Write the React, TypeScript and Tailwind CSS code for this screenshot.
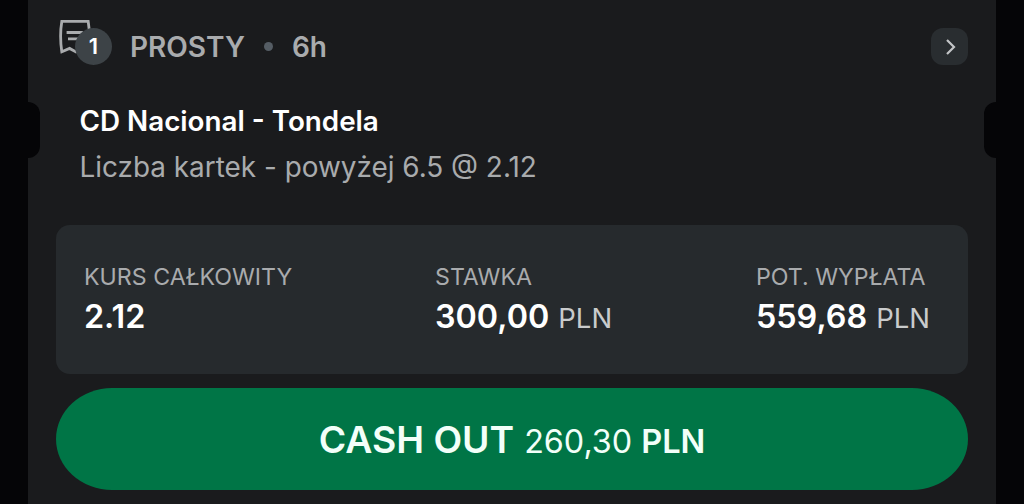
type StatProps = {
  label: string;
  value: string;
  currency?: string;
};

function ReceiptIcon() {
  return (
    <svg width="38" height="38" viewBox="0 0 38 38" fill="none" stroke="#a9abad" strokeWidth="2.8">
      <path d="M5.8 2.4H32.2C33.8 12 33.8 22 32.2 32.7L26.4 29.4L20 32.9L13.6 29.4L5.8 32.7C4.2 22 4.2 12 5.8 2.4Z" />
      <path d="M10.6 13.5H27M12 19.8H26" />
    </svg>
  );
}

function Stat({ label, value, currency }: StatProps) {
  return (
    <div className="whitespace-nowrap">
      <div className="text-[23.2px] leading-8 text-[#a9abad]">{label}</div>
      <div className="text-[32.3px] leading-[48px] font-semibold text-white">
        {value}
        {currency && (
          <span className="ml-[9px] text-[27.5px] leading-none font-normal text-[#c9cbcc]">{currency}</span>
        )}
      </div>
    </div>
  );
}

export default function App() {
  return (
    <div className="h-[504px] w-[1024px] overflow-hidden bg-[#050507] px-7 font-['Inter',sans-serif]">
      <div className="relative flex h-full flex-col bg-[#1a1b1d] px-7">
        <div className="absolute top-[102px] left-0 h-14 w-3 rounded-r-xl bg-[#050507]"></div>
        <div className="absolute top-[102px] right-0 h-14 w-3 rounded-l-xl bg-[#050507]"></div>

        <header className="flex h-[93px] items-center">
          <div className="relative h-[55px] w-[56px]">
            <ReceiptIcon />
            <span className="absolute top-[9px] left-[19px] flex h-[37px] w-[37px] items-center justify-center rounded-full bg-[#3d4347] text-[22px] font-semibold text-white">
              1
            </span>
          </div>
          <span className="ml-[18px] text-[28px] font-semibold text-[#a9abad]">PROSTY</span>
          <span className="ml-[19px] h-[9px] w-[9px] rounded-full bg-[#555d64]"></span>
          <span className="ml-[19px] text-[28px] font-semibold text-[#a9abad]">6h</span>
          <button className="ml-auto flex h-[37px] w-[37px] items-center justify-center rounded-[12px] bg-[#292d30]">
            <svg width="12" height="18" viewBox="0 0 12 18" fill="none" stroke="#c3c5c7" strokeWidth="2.2">
              <path d="M3 2L10 9L3 16" />
            </svg>
          </button>
        </header>

        <section className="h-[132px] pt-2 pl-[23.5px]">
          <h1 className="text-[27.8px] leading-[41px] font-semibold text-white">CD Nacional - Tondela</h1>
          <p className="mt-[5px] text-[27.9px] leading-[41px] text-[#a9abad]">
            Liczba kartek - powyżej 6.5 @ 2.12
          </p>
        </section>

        <section className="grid h-[149px] grid-cols-[351px_321px_auto] rounded-[14px] bg-[#262a2d] pt-9 pl-7">
          <Stat label="KURS CAŁKOWITY" value="2.12" />
          <Stat label="STAWKA" value="300,00" currency="PLN" />
          <Stat label="POT. WYPŁATA" value="559,68" currency="PLN" />
        </section>

        <button className="mt-[14px] flex h-[102px] items-baseline justify-center rounded-[56px/51px] bg-[#007546] text-[#f2fff9]">
          <span className="text-[37.3px] leading-[104px] font-semibold">CASH OUT</span>
          <span className="ml-[10px] text-[32.3px]">260,30</span>
          <span className="ml-[9px] text-[32.6px] font-semibold">PLN</span>
        </button>
      </div>
    </div>
  );
}
